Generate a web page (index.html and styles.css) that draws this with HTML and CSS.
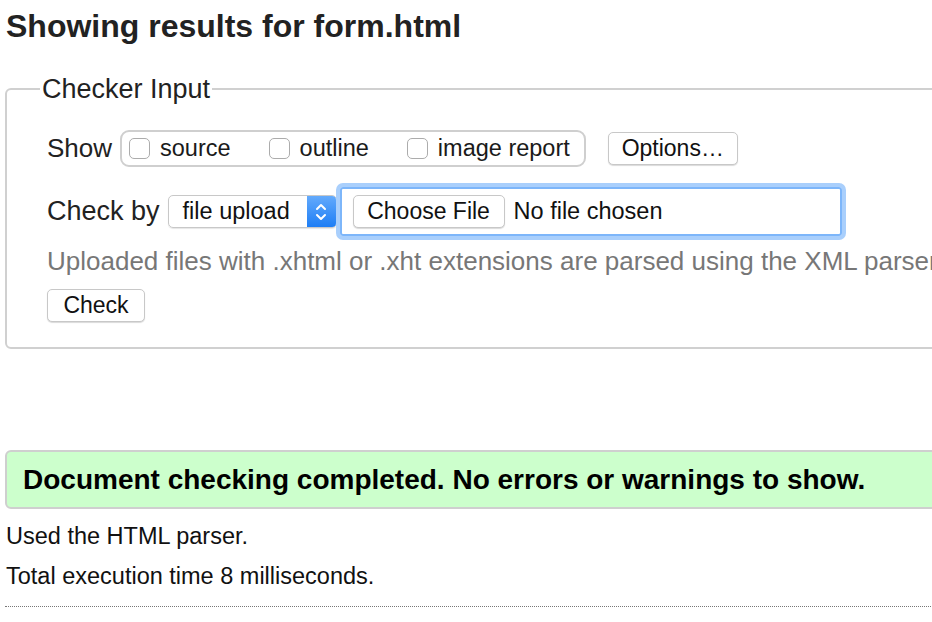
FILE: index.html
```html
<!DOCTYPE html>
<html>
<head>
<meta charset="utf-8">
<link rel="stylesheet" href="styles.css">
</head>
<body>
<h2 class="title">Showing results for form.html</h2>
<fieldset class="checker">
  <legend class="legend">Checker Input</legend>
  <div class="row show-row">
    <span class="label">Show</span>
    <div class="group">
      <label class="opt"><span class="box"></span>source</label>
      <label class="opt"><span class="box"></span>outline</label>
      <label class="opt"><span class="box"></span>image report</label>
    </div>
    <span class="btn options">Options…</span>
  </div>
  <div class="row by-row">
    <span class="label">Check by</span>
    <div class="select">
      <span class="select-text">file upload</span>
      <span class="stepper">
        <svg width="14" height="24" viewBox="0 0 14 24"><path d="M3 9 L7 5 L11 9 M3 15 L7 19 L11 15" fill="none" stroke="#fff" stroke-width="2" stroke-linecap="round" stroke-linejoin="round"/></svg>
      </span>
    </div>
    <div class="file">
      <span class="btn choose">Choose File</span>
      <span class="nofile">No file chosen</span>
    </div>
  </div>
  <p class="hint">Uploaded files with .xhtml or .xht extensions are parsed using the XML parser.</p>
  <span class="btn check">Check</span>
</fieldset>
<div class="success"><p>Document checking completed. No errors or warnings to show.</p></div>
<p class="stat">Used the HTML parser.</p>
<p class="stat">Total execution time 8 milliseconds.</p>
<hr class="dotted">
</body>
</html>
```
FILE: styles.css
```css
html, body {
  margin: 0;
  padding: 0;
  overflow: hidden;
  background: #fff;
}
body {
  font-family: "Liberation Sans", Arial, sans-serif;
  color: #1a1a1a;
  padding: 0 0 0 5px;
  width: 1000px;
}
.title {
  font-size: 32px;
  font-weight: bold;
  margin: 8px 0 0 1px;
  line-height: 37px;
  color: #222;
}
.checker {
  margin: 29px 0 0 0;
  border: 2px solid #d0d0d0;
  border-radius: 6px;
  padding: 26px 0 25px 40px;
  width: 980px;
  box-sizing: border-box;
}
.legend {
  font-size: 27px;
  padding: 0 2px;
  margin-left: -7px;
  line-height: 30px;
  color: #222;
}
.row {
  display: flex;
  align-items: center;
  font-size: 23.5px;
}
.label {
  font-size: 26px;
  margin-right: 8px;
  color: #222;
}
.by-row .label {
  font-size: 27px;
  margin-top: 3px;
}
.group {
  display: flex;
  align-items: center;
  border: 2px solid #cfcfcf;
  border-radius: 9px;
  height: 37px;
  padding: 0 14px 0 7px;
  box-sizing: border-box;
}
.opt {
  display: flex;
  align-items: center;
  margin-right: 38px;
}
.opt:last-child { margin-right: 0; }
.box {
  width: 21px;
  height: 21px;
  border: 1px solid #acacac;
  border-radius: 5px;
  margin-right: 10px;
  box-sizing: border-box;
  background: #fff;
}
.btn {
  display: inline-flex;
  align-items: center;
  justify-content: center;
  border: 1px solid #c8c8c8;
  border-radius: 5px;
  background: #fff;
  box-shadow: 0 1px 1px rgba(0,0,0,0.15);
  font-size: 23px;
  height: 33px;
  box-sizing: border-box;
  color: #111;
}
.options {
  width: 130px;
  margin-left: 22px;
}
.by-row {
  margin-top: 17px;
}
.select {
  display: flex;
  align-items: stretch;
  height: 33px;
  width: 169px;
  margin-top: 3px;
  border: 1px solid #c8c8c8;
  border-radius: 5px;
  box-sizing: border-box;
  overflow: hidden;
  box-shadow: 0 1px 1px rgba(0,0,0,0.1);
  font-size: 23.5px;
  color: #111;
}
.select-text {
  flex: 1;
  padding-left: 14px;
  display: flex;
  align-items: center;
}
.stepper {
  width: 29px;
  background: linear-gradient(#63aafc, #1e7ef5);
  display: flex;
  align-items: center;
  justify-content: center;
}
.file {
  display: flex;
  align-items: center;
  width: 502px;
  height: 49px;
  margin-top: 3px;
  box-sizing: border-box;
  border: 2px solid #7db6fa;
  box-shadow: 0 0 0 4px #a9cffc;
  border-radius: 3px;
  margin-left: 3px;
  padding-left: 11px;
}
.choose {
  width: 152px;
}
.nofile {
  margin-left: 9px;
  font-size: 23.5px;
  color: #111;
}
.hint {
  font-size: 26px;
  color: #777;
  margin: 10px 0 0 0;
  line-height: 30px;
  white-space: nowrap;
}
.check {
  width: 98px;
  margin-top: 13px;
}
.success {
  margin-top: 101px;
  width: 980px;
  height: 59px;
  box-sizing: border-box;
  background: #ccffcc;
  border: 2px solid #cfcfcf;
  border-radius: 6px;
  display: flex;
  align-items: center;
  padding-left: 16px;
}
.success p {
  margin: 0;
  font-size: 28px;
  font-weight: bold;
  color: #000;
}
.stat {
  font-size: 23.5px;
  margin: 14px 0 0 1px;
  line-height: 27px;
  color: #111;
}
.stat + .stat {
  margin-top: 13px;
}
.dotted {
  border: 0;
  border-top: 1px dotted #777;
  margin: 16px 0 0 0;
  width: 980px;
}
```
